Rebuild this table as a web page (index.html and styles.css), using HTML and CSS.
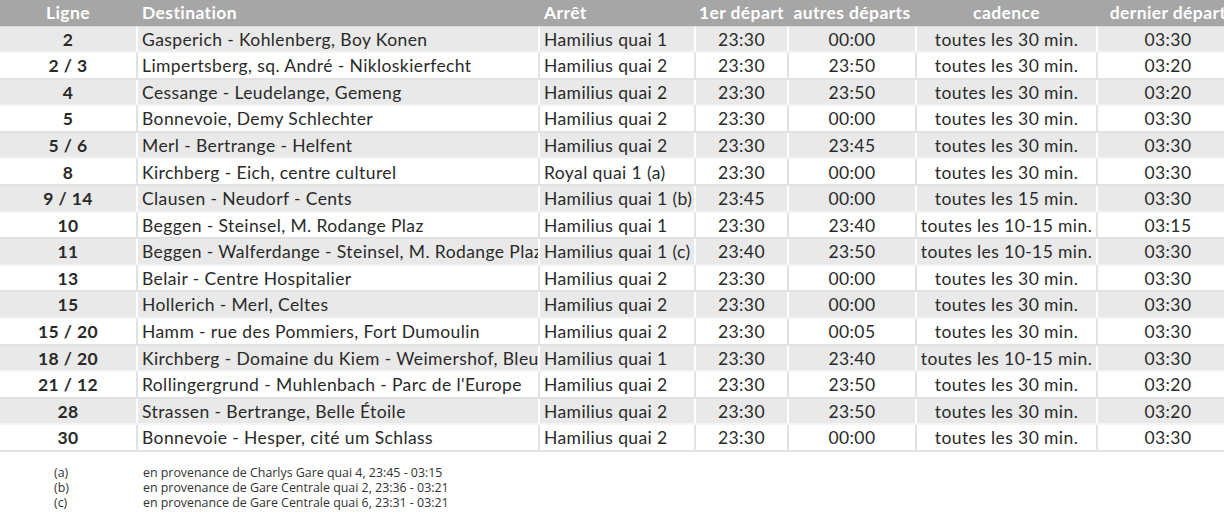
FILE: index.html
```html
<!DOCTYPE html>
<html lang="fr">
<head>
<meta charset="utf-8">
<title>Horaires</title>
<link rel="stylesheet" href="styles.css">
</head>
<body>
<div class="sheet">
  <div class="row head">
    <div class="c c1">Ligne</div>
    <div class="c c2 left">Destination</div>
    <div class="c c3 left">Arrêt</div>
    <div class="c c4">1er départ</div>
    <div class="c c5">autres départs</div>
    <div class="c c6">cadence</div>
    <div class="c c7">dernier départ</div>
  </div>
  <div class="row alt"><div class="c c1 b">2</div><div class="c c2 left">Gasperich - Kohlenberg, Boy Konen</div><div class="c c3 left">Hamilius quai 1</div><div class="c c4">23:30</div><div class="c c5">00:00</div><div class="c c6">toutes les 30 min.</div><div class="c c7">03:30</div></div>
  <div class="row"><div class="c c1 b">2 / 3</div><div class="c c2 left">Limpertsberg, sq. André - Nikloskierfecht</div><div class="c c3 left">Hamilius quai 2</div><div class="c c4">23:30</div><div class="c c5">23:50</div><div class="c c6">toutes les 30 min.</div><div class="c c7">03:20</div></div>
  <div class="row alt"><div class="c c1 b">4</div><div class="c c2 left">Cessange - Leudelange, Gemeng</div><div class="c c3 left">Hamilius quai 2</div><div class="c c4">23:30</div><div class="c c5">23:50</div><div class="c c6">toutes les 30 min.</div><div class="c c7">03:20</div></div>
  <div class="row"><div class="c c1 b">5</div><div class="c c2 left">Bonnevoie, Demy Schlechter</div><div class="c c3 left">Hamilius quai 2</div><div class="c c4">23:30</div><div class="c c5">00:00</div><div class="c c6">toutes les 30 min.</div><div class="c c7">03:30</div></div>
  <div class="row alt"><div class="c c1 b">5 / 6</div><div class="c c2 left">Merl - Bertrange - Helfent</div><div class="c c3 left">Hamilius quai 2</div><div class="c c4">23:30</div><div class="c c5">23:45</div><div class="c c6">toutes les 30 min.</div><div class="c c7">03:30</div></div>
  <div class="row"><div class="c c1 b">8</div><div class="c c2 left">Kirchberg - Eich, centre culturel</div><div class="c c3 left">Royal quai 1 (a)</div><div class="c c4">23:30</div><div class="c c5">00:00</div><div class="c c6">toutes les 30 min.</div><div class="c c7">03:30</div></div>
  <div class="row alt"><div class="c c1 b">9 / 14</div><div class="c c2 left">Clausen - Neudorf - Cents</div><div class="c c3 left">Hamilius quai 1 (b)</div><div class="c c4">23:45</div><div class="c c5">00:00</div><div class="c c6">toutes les 15 min.</div><div class="c c7">03:30</div></div>
  <div class="row"><div class="c c1 b">10</div><div class="c c2 left">Beggen - Steinsel, M. Rodange Plaz</div><div class="c c3 left">Hamilius quai 1</div><div class="c c4">23:30</div><div class="c c5">23:40</div><div class="c c6">toutes les 10-15 min.</div><div class="c c7">03:15</div></div>
  <div class="row alt"><div class="c c1 b">11</div><div class="c c2 left">Beggen - Walferdange - Steinsel, M. Rodange Plaz</div><div class="c c3 left">Hamilius quai 1 (c)</div><div class="c c4">23:40</div><div class="c c5">23:50</div><div class="c c6">toutes les 10-15 min.</div><div class="c c7">03:30</div></div>
  <div class="row"><div class="c c1 b">13</div><div class="c c2 left">Belair - Centre Hospitalier</div><div class="c c3 left">Hamilius quai 2</div><div class="c c4">23:30</div><div class="c c5">00:00</div><div class="c c6">toutes les 30 min.</div><div class="c c7">03:30</div></div>
  <div class="row alt"><div class="c c1 b">15</div><div class="c c2 left">Hollerich - Merl, Celtes</div><div class="c c3 left">Hamilius quai 2</div><div class="c c4">23:30</div><div class="c c5">00:00</div><div class="c c6">toutes les 30 min.</div><div class="c c7">03:30</div></div>
  <div class="row"><div class="c c1 b">15 / 20</div><div class="c c2 left">Hamm - rue des Pommiers, Fort Dumoulin</div><div class="c c3 left">Hamilius quai 2</div><div class="c c4">23:30</div><div class="c c5">00:05</div><div class="c c6">toutes les 30 min.</div><div class="c c7">03:30</div></div>
  <div class="row alt"><div class="c c1 b">18 / 20</div><div class="c c2 left">Kirchberg - Domaine du Kiem - Weimershof, Bleuets</div><div class="c c3 left">Hamilius quai 1</div><div class="c c4">23:30</div><div class="c c5">23:40</div><div class="c c6">toutes les 10-15 min.</div><div class="c c7">03:30</div></div>
  <div class="row"><div class="c c1 b">21 / 12</div><div class="c c2 left">Rollingergrund - Muhlenbach - Parc de l'Europe</div><div class="c c3 left">Hamilius quai 2</div><div class="c c4">23:30</div><div class="c c5">23:50</div><div class="c c6">toutes les 30 min.</div><div class="c c7">03:20</div></div>
  <div class="row alt"><div class="c c1 b">28</div><div class="c c2 left">Strassen - Bertrange, Belle Étoile</div><div class="c c3 left">Hamilius quai 2</div><div class="c c4">23:30</div><div class="c c5">23:50</div><div class="c c6">toutes les 30 min.</div><div class="c c7">03:20</div></div>
  <div class="row"><div class="c c1 b">30</div><div class="c c2 left">Bonnevoie - Hesper, cité um Schlass</div><div class="c c3 left">Hamilius quai 2</div><div class="c c4">23:30</div><div class="c c5">00:00</div><div class="c c6">toutes les 30 min.</div><div class="c c7">03:30</div></div>
</div>
<div class="notes">
  <div class="note"><span class="mark">(a)</span><span>en provenance de Charlys Gare quai 4, 23:45 - 03:15</span></div>
  <div class="note"><span class="mark">(b)</span><span>en provenance de Gare Centrale quai 2, 23:36 - 03:21</span></div>
  <div class="note"><span class="mark">(c)</span><span>en provenance de Gare Centrale quai 6, 23:31 - 03:21</span></div>
</div>
</body>
</html>
```
FILE: styles.css
```css
html, body {
  margin: 0;
  padding: 0;
  background: #ffffff;
}
body {
  font-family: Lato, "Open Sans", "Liberation Sans", sans-serif;
  color: #2a2a2a;
  width: 1224px;
  height: 531px;
  overflow: hidden;
}
.sheet {
  width: 1240px;
  background: #e2e2e2;
}
.row {
  display: grid;
  grid-template-columns: 136px 400px 154px 91px 126px 179px 140px;
  column-gap: 2px;
  height: 26.6px;
  box-sizing: border-box;
  border-bottom: 2px solid #e2e2e2;
  background: #e2e2e2;
  font-size: 17.5px;
  letter-spacing: 0.4px;
}
.row.alt {
  background: #ffffff;
  border-bottom-color: #f4f4f4;
}
.row.head {
  height: 26.5px;
  background: #a6a6a6;
  border-bottom: 1px solid #d8d8d8;
  color: #ffffff;
  font-weight: 700;
}
.c {
  background: #ffffff;
  display: flex;
  align-items: center;
  justify-content: center;
  white-space: nowrap;
  overflow: hidden;
  line-height: 1;
  padding-top: 1px;
}
.row.head .c { padding-top: 0; }
.row.alt .c { background: #e9e9e9; }
.row.head .c { background: #a6a6a6; }
.c.left {
  justify-content: flex-start;
  padding-left: 4px;
}
.c.b { font-weight: 700; }
.notes {
  padding: 13px 0 0 0;
  font-family: "Open Sans", "Liberation Sans", sans-serif;
  font-size: 12.4px;
  color: #333333;
}
.note {
  display: flex;
  height: 15px;
  align-items: center;
}
.mark {
  width: 143px;
  padding-left: 54px;
  box-sizing: border-box;
  flex: none;
}
```
